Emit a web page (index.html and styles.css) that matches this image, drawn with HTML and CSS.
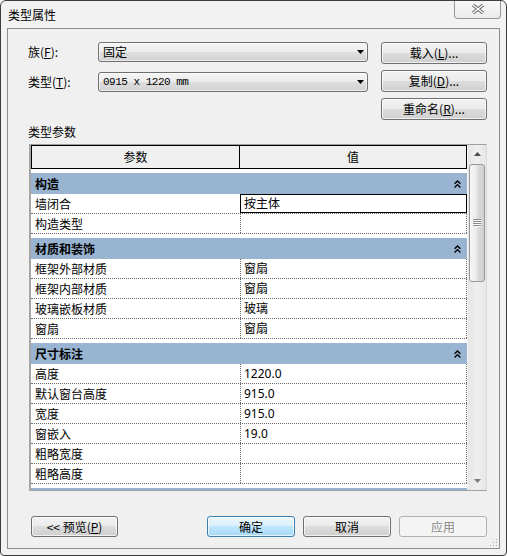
FILE: index.html
```html
<!DOCTYPE html>
<html>
<head>
<meta charset="utf-8">
<title>类型属性</title>
<link rel="stylesheet" href="styles.css">
</head>
<body>
<div class="window">
  <div class="titlebar">
    <span class="title">类型属性</span>
    <div class="close">
      <svg width="14" height="10" viewBox="0 0 14 10">
        <path d="M2 1 L12 9 M12 1 L2 9" stroke="#6b6b6b" stroke-width="3.4" fill="none"/>
        <path d="M2 1 L12 9 M12 1 L2 9" stroke="#fbfbfb" stroke-width="1.4" fill="none"/>
      </svg>
    </div>
  </div>
  <div class="client">
    <div class="top">
      <div class="fields">
        <div class="field">
          <span class="flabel">族(<u>F</u>):</span>
          <div class="combo"><span>固定</span><svg class="arrow" width="7" height="4" viewBox="0 0 7 4"><polygon points="0,0 7,0 3.5,4" fill="#000"/></svg></div>
        </div>
        <div class="field">
          <span class="flabel">类型(<u>T</u>):</span>
          <div class="combo"><span class="mono">0915 x 1220 mm</span><svg class="arrow" width="7" height="4" viewBox="0 0 7 4"><polygon points="0,0 7,0 3.5,4" fill="#000"/></svg></div>
        </div>
      </div>
      <div class="side">
        <div class="btn side-btn">载入(<u>L</u>)...</div>
        <div class="btn side-btn">复制(<u>D</u>)...</div>
        <div class="btn side-btn">重命名(<u>R</u>)...</div>
      </div>
    </div>
    <div class="section-label">类型参数</div>
    <div class="grid-box">
      <div class="grid">
        <div class="grid-head">
          <div class="hc1">参数</div>
          <div class="hc2">值</div>
        </div>
        <div class="grid-body">
          <div class="group"><div class="group-bar"><span>构造</span><svg width="7" height="8" viewBox="0 0 7 8"><polyline points="0.6,3.8 3.5,1 6.4,3.8" fill="none" stroke="#000" stroke-width="1.4"/><polyline points="0.6,7.4 3.5,4.6 6.4,7.4" fill="none" stroke="#000" stroke-width="1.4"/></svg></div></div>
          <div class="row"><div class="c1">墙闭合</div><div class="c2 focus">按主体</div></div>
          <div class="row"><div class="c1">构造类型</div><div class="c2"></div></div>

          <div class="group"><div class="group-bar"><span>材质和装饰</span><svg width="7" height="8" viewBox="0 0 7 8"><polyline points="0.6,3.8 3.5,1 6.4,3.8" fill="none" stroke="#000" stroke-width="1.4"/><polyline points="0.6,7.4 3.5,4.6 6.4,7.4" fill="none" stroke="#000" stroke-width="1.4"/></svg></div></div>
          <div class="row"><div class="c1">框架外部材质</div><div class="c2">窗扇</div></div>
          <div class="row"><div class="c1">框架内部材质</div><div class="c2">窗扇</div></div>
          <div class="row"><div class="c1">玻璃嵌板材质</div><div class="c2">玻璃</div></div>
          <div class="row"><div class="c1">窗扇</div><div class="c2">窗扇</div></div>

          <div class="group"><div class="group-bar"><span>尺寸标注</span><svg width="7" height="8" viewBox="0 0 7 8"><polyline points="0.6,3.8 3.5,1 6.4,3.8" fill="none" stroke="#000" stroke-width="1.4"/><polyline points="0.6,7.4 3.5,4.6 6.4,7.4" fill="none" stroke="#000" stroke-width="1.4"/></svg></div></div>
          <div class="row"><div class="c1">高度</div><div class="c2">1220.0</div></div>
          <div class="row"><div class="c1">默认窗台高度</div><div class="c2">915.0</div></div>
          <div class="row"><div class="c1">宽度</div><div class="c2">915.0</div></div>
          <div class="row"><div class="c1">窗嵌入</div><div class="c2">19.0</div></div>
          <div class="row"><div class="c1">粗略宽度</div><div class="c2"></div></div>
          <div class="row"><div class="c1">粗略高度</div><div class="c2"></div></div>

          <div class="group"><div class="group-bar"></div></div>
        </div>
      </div>
      <div class="scrollbar">
        <div class="sb-btn"><svg width="7" height="4" viewBox="0 0 7 4"><polygon points="0,4 3.5,0 7,4" fill="#4a4a4a"/></svg></div>
        <div class="thumb">
          <svg width="8" height="8" viewBox="0 0 8 8">
            <path d="M0 0.5 H8 M0 2.5 H8 M0 4.5 H8 M0 6.5 H8" stroke="#8a8a8a" stroke-width="1"/>
            <path d="M0 1.5 H8 M0 3.5 H8 M0 5.5 H8 M0 7.5 H8" stroke="#fafafa" stroke-width="1"/>
          </svg>
        </div>
        <div class="sb-fill"></div>
        <div class="sb-btn"><svg width="7" height="4" viewBox="0 0 7 4"><polygon points="0,0 7,0 3.5,4" fill="#7a7a7a"/></svg></div>
      </div>
    </div>
    <div class="footer">
      <div class="btn preview">&lt;&lt; 预览(<u>P</u>)</div>
      <div class="btn default">确定</div>
      <div class="btn">取消</div>
      <div class="btn disabled">应用</div>
    </div>
  </div>
  <svg class="grip" width="10" height="10" viewBox="0 0 10 10">
    <rect x="8" y="2" width="1" height="1" fill="#a8a8a8"/>
    <rect x="5" y="5" width="1" height="1" fill="#a8a8a8"/>
    <rect x="8" y="5" width="1" height="1" fill="#a8a8a8"/>
    <rect x="2" y="8" width="1" height="1" fill="#a8a8a8"/>
    <rect x="5" y="8" width="1" height="1" fill="#a8a8a8"/>
    <rect x="8" y="8" width="1" height="1" fill="#a8a8a8"/>
  </svg>
</div>
</body>
</html>
```

FILE: styles.css
```css
* {
  box-sizing: border-box;
}

html, body {
  margin: 0;
  padding: 0;
}

body {
  width: 507px;
  height: 556px;
  background: #ffffff;
  font-family: "Noto Sans CJK SC", "Noto Sans", sans-serif;
  font-size: 12px;
  line-height: 16px;
  color: #000;
}

.window {
  position: relative;
  width: 507px;
  height: 556px;
  border: 1px solid #3e3e3e;
  border-radius: 6px 6px 4px 4px;
  background: #f2f2f2;
  display: flex;
  flex-direction: column;
  overflow: hidden;
}

.titlebar {
  position: relative;
  flex: none;
  height: 27px;
  padding-left: 7px;
  display: flex;
  align-items: center;
}

.title {
  font-size: 12px;
}

.close {
  position: absolute;
  top: -1px;
  right: 5px;
  width: 47px;
  height: 19px;
  border: 1px solid #969696;
  border-top: none;
  border-radius: 0 0 4px 4px;
  background: linear-gradient(#f8f8f8, #ececec);
  display: flex;
  align-items: center;
  justify-content: center;
}

.client {
  flex: 1;
  margin: 0 6px 6px 6px;
  border: 1px solid #8c8c8c;
  background: #f0f0f0;
  padding: 13px 12px 0 20px;
  display: flex;
  flex-direction: column;
}

.top {
  display: flex;
  justify-content: space-between;
  align-items: flex-start;
}

.fields {
  width: 340px;
  display: flex;
  flex-direction: column;
  gap: 10px;
}

.field {
  display: flex;
  align-items: center;
  height: 20px;
}

.flabel {
  width: 70px;
}

.combo {
  width: 270px;
  height: 20px;
  border: 1px solid #707070;
  border-radius: 3px;
  background: linear-gradient(to bottom, #f4f4f4 0%, #ececec 50%, #dedede 51%, #d2d2d2 100%);
  box-shadow: inset 0 0 0 1px rgba(255, 255, 255, 0.6);
  display: flex;
  align-items: center;
  justify-content: space-between;
  padding: 0 3px 0 4px;
}

.mono {
  font-family: "Liberation Mono", "DejaVu Sans Mono", monospace;
  font-size: 11px;
  letter-spacing: -0.5px;
}

.side {
  width: 106px;
  display: flex;
  flex-direction: column;
  gap: 6px;
}

.btn {
  height: 22px;
  border: 1px solid #707070;
  border-radius: 3px;
  background: linear-gradient(to bottom, #f2f2f2 0%, #ebebeb 49%, #dddddd 50%, #cfcfcf 100%);
  box-shadow: inset 0 0 0 1px rgba(255, 255, 255, 0.7);
  display: flex;
  align-items: center;
  justify-content: center;
  white-space: nowrap;
}

.side-btn {
  width: 106px;
}

.section-label {
  margin: 4px 0 4px 0;
  line-height: 16px;
}

.grid-box {
  flex: none;
  margin-left: 1px;
  width: 458px;
  height: 347px;
  border: 1px solid #a0a0a0;
  border-left: 2px solid #a6a6a6;
  border-right-color: #dadada;
  display: flex;
  overflow: hidden;
}

.grid {
  width: 436px;
  display: flex;
  flex-direction: column;
  overflow: hidden;
  background: #ffffff;
}

.grid-head {
  flex: none;
  height: 24px;
  display: flex;
  border: 1px solid #000;
  background: #f0f0f0;
}

.hc1 {
  width: 208px;
  border-right: 1px solid #000;
  text-align: center;
  line-height: 22px;
}

.hc2 {
  flex: 1;
  text-align: center;
  line-height: 22px;
}

.grid-body {
  flex: 1;
  overflow: hidden;
  background: #ffffff;
}

.group {
  height: 25px;
  padding-top: 4px;
  background: #ffffff;
}

.group-bar {
  height: 21px;
  background: #98b4d1;
  display: flex;
  align-items: center;
  justify-content: space-between;
  padding: 0 6px 0 4px;
  font-weight: bold;
}

.row {
  display: flex;
  height: 20px;
  border-bottom: 1px dotted #6a6a6a;
}

.c1 {
  width: 209px;
  padding-left: 4px;
  line-height: 19px;
  white-space: nowrap;
}

.c2 {
  flex: 1;
  border-left: 1px dotted #6a6a6a;
  border-right: 1px dotted #6a6a6a;
  padding-left: 3px;
  line-height: 19px;
  font-family: "Noto Sans", "Noto Sans CJK SC", sans-serif;
  white-space: nowrap;
}

.c2.focus {
  border-left: 1px solid #000;
  border-right: 1px solid #000;
  box-shadow: inset 0 1px 0 #000, inset 0 -1px 0 #000;
}

.scrollbar {
  width: 19px;
  display: flex;
  flex-direction: column;
  background: linear-gradient(to right, #e6e6e6, #efefef 50%, #e6e6e6);
  border-left: 1px solid #f6f6f6;
}

.sb-btn {
  flex: none;
  height: 18px;
  display: flex;
  align-items: center;
  justify-content: center;
}

.thumb {
  flex: none;
  margin: 1px 1px 0 1px;
  height: 118px;
  border: 1px solid #989898;
  border-radius: 3px;
  background: linear-gradient(to right, #f7f7f7 0%, #ebebeb 45%, #dcdcdc 55%, #cfcfcf 100%);
  display: flex;
  align-items: center;
  justify-content: center;
}

.sb-fill {
  flex: 1;
}

.footer {
  flex: none;
  margin-top: 25px;
  height: 21px;
  display: flex;
  gap: 8px;
  padding-left: 3px;
}

.footer .btn {
  width: 88px;
  height: 21px;
}

.footer .preview {
  width: 87px;
  margin-right: auto;
}

.footer .default {
  border-color: #3c7fb1;
  background: linear-gradient(to bottom, #eaf6fd 0%, #d9f0fc 49%, #bee6fd 50%, #a7d9f5 100%);
}

.footer .disabled {
  border-color: #adb2b5;
  background: #f4f4f4;
  box-shadow: none;
  color: #8a8a8a;
}

.grip {
  position: absolute;
  right: 8px;
  bottom: 8px;
}
```
